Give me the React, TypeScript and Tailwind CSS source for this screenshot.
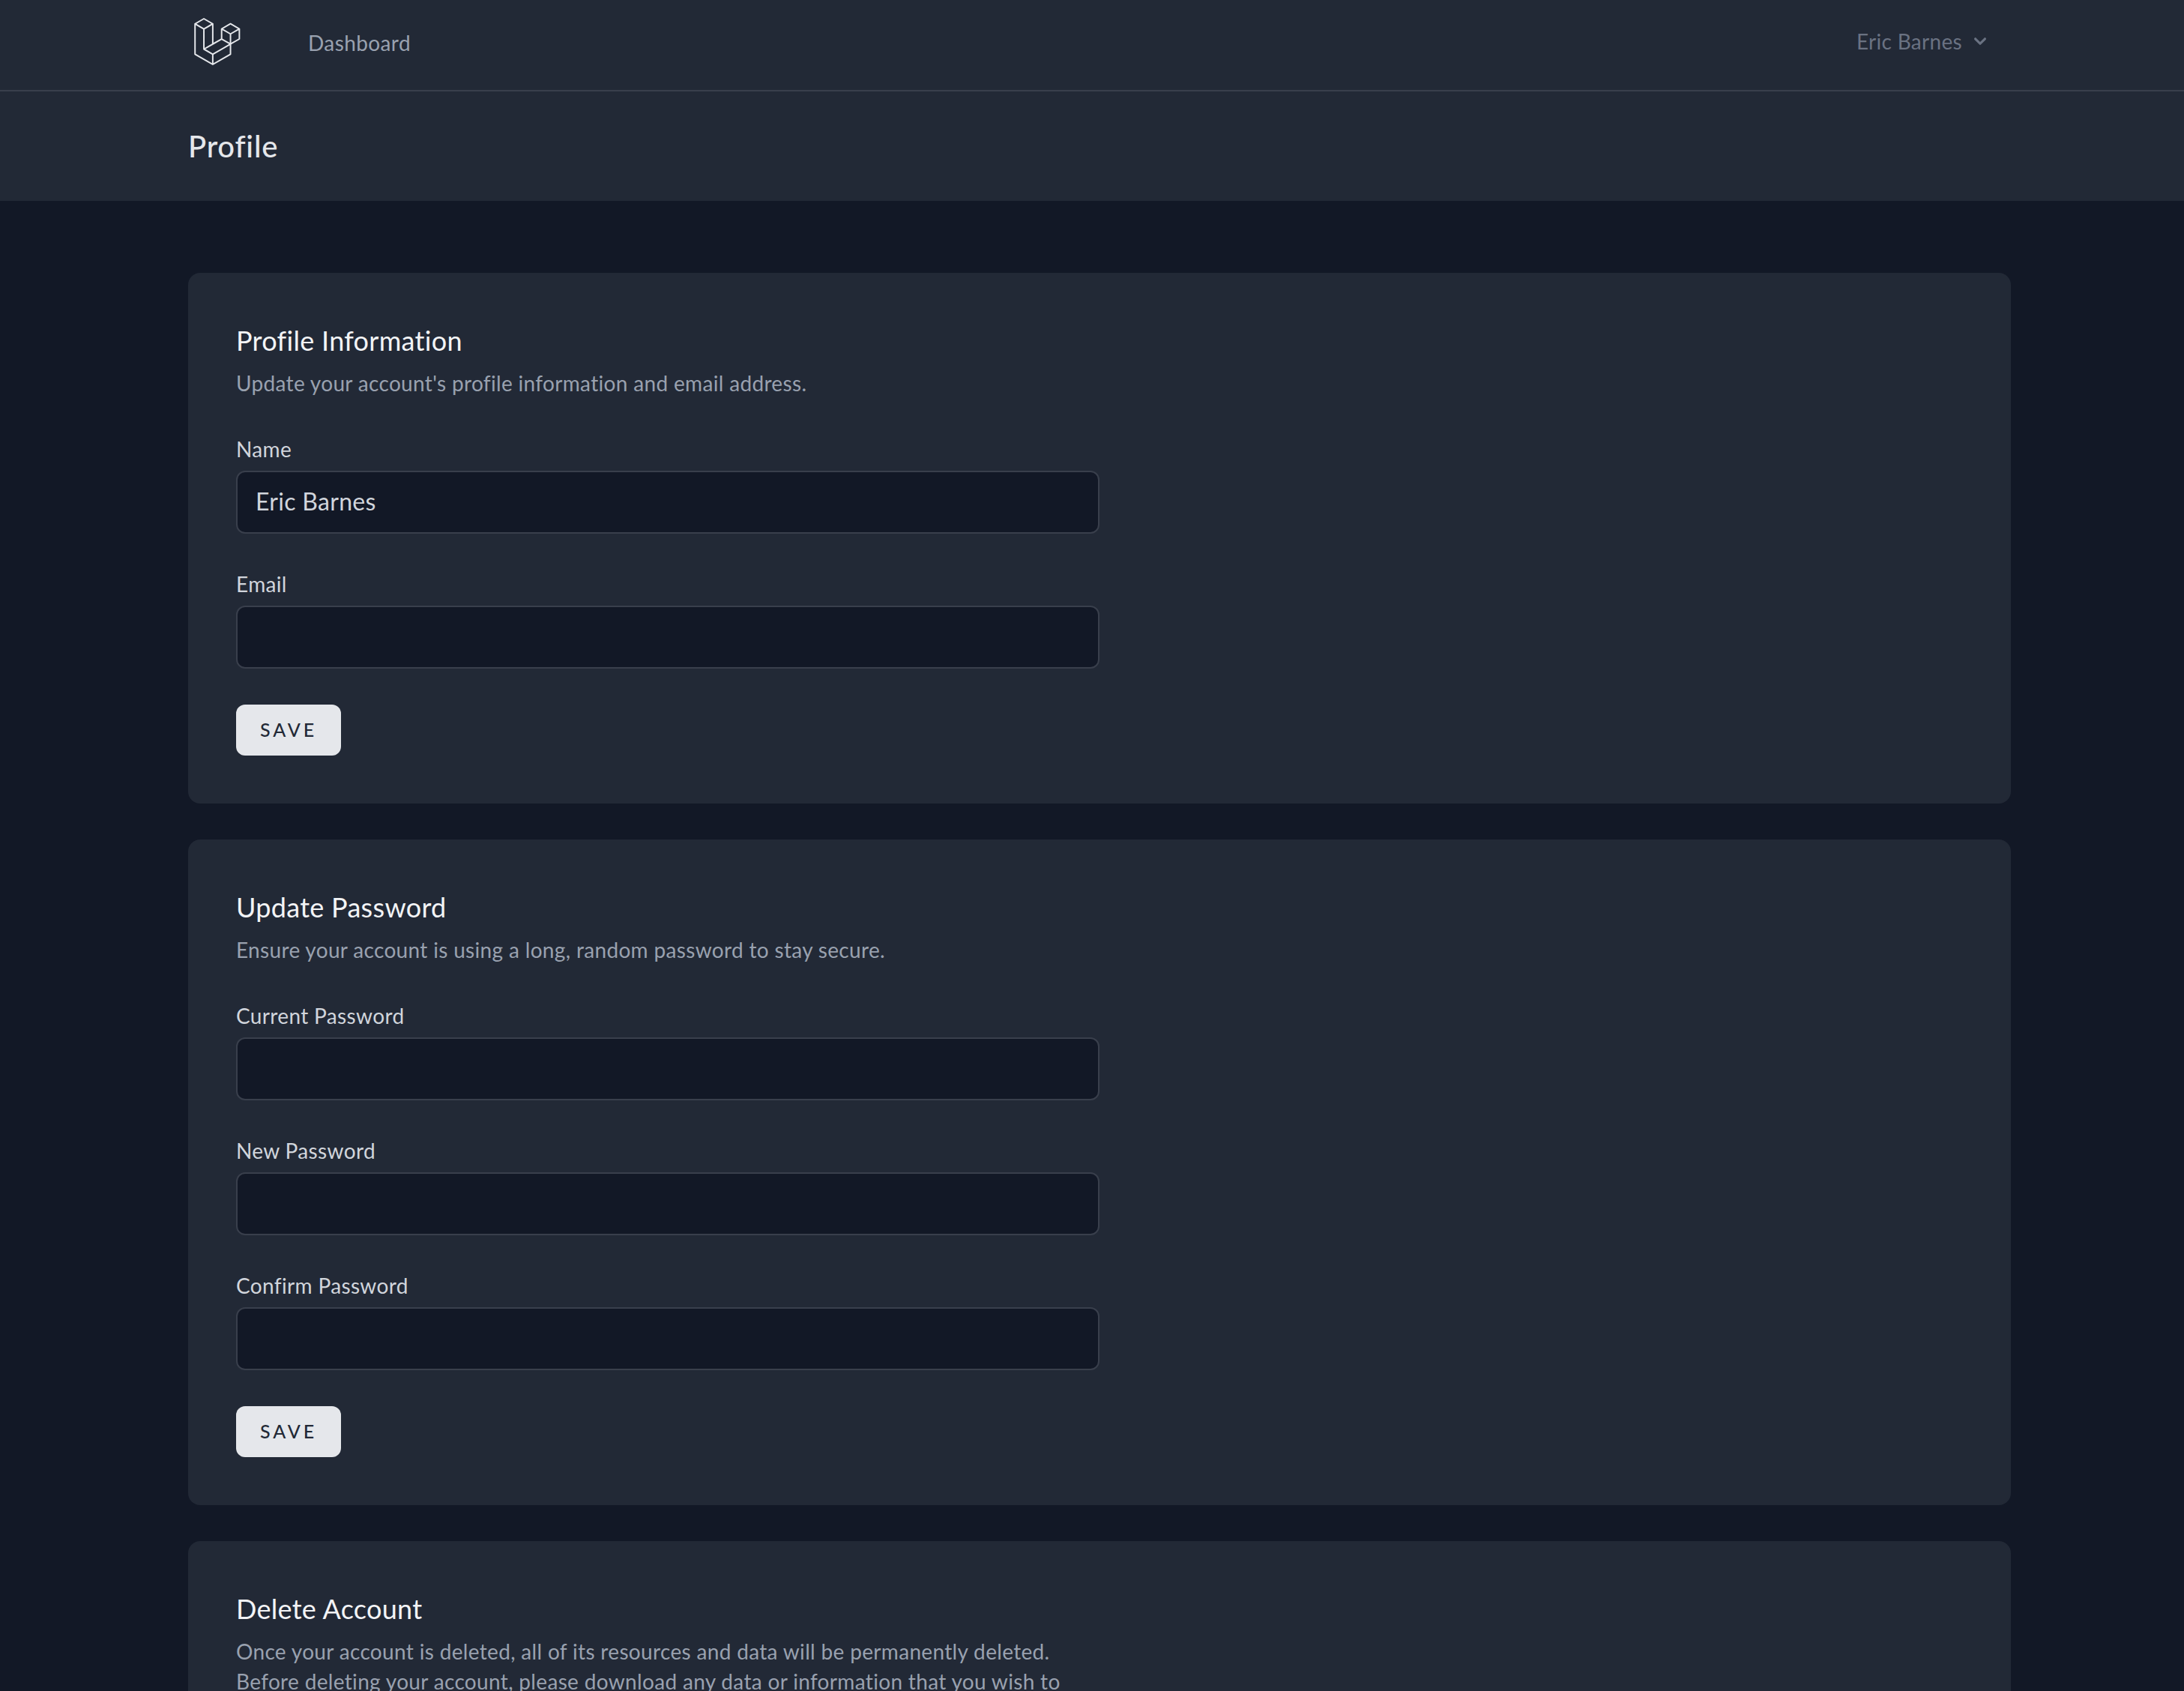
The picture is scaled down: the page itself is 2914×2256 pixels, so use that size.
const logoPath =
  "M49.626 11.564a.809.809 0 0 1 .028.209v10.972a.8.8 0 0 1-.402.694l-9.209 5.302V39.25c0 .286-.152.55-.4.694L20.42 51.01c-.044.025-.092.041-.14.058-.018.006-.035.017-.054.022a.805.805 0 0 1-.41 0c-.022-.006-.042-.018-.063-.026-.044-.016-.09-.03-.132-.054L.402 39.944A.801.801 0 0 1 0 39.25V6.334c0-.072.01-.142.028-.21.006-.023.02-.044.028-.067.015-.042.029-.085.051-.124.015-.026.037-.047.055-.071.023-.032.044-.065.071-.093.023-.023.053-.04.079-.06.029-.024.055-.05.088-.069h.001l9.61-5.533a.802.802 0 0 1 .8 0l9.61 5.533h.002c.032.02.059.045.088.068.026.02.055.038.078.06.028.029.048.062.072.094.017.024.04.045.054.071.023.04.036.082.052.124.008.023.022.044.028.068a.809.809 0 0 1 .028.209v20.559l8.008-4.611v-10.51c0-.07.01-.141.028-.208.007-.024.02-.045.028-.068.016-.042.03-.085.052-.124.015-.026.037-.047.054-.071.024-.032.044-.065.072-.093.023-.023.052-.04.078-.06.03-.024.056-.05.088-.069h.001l9.611-5.533a.801.801 0 0 1 .8 0l9.61 5.533c.034.02.06.045.09.068.025.02.054.038.077.06.028.029.048.062.072.094.018.024.04.045.054.071.023.039.036.082.052.124.009.023.022.044.028.068zm-1.574 10.718v-9.124l-3.363 1.936-4.646 2.675v9.124l8.01-4.611zm-9.61 16.505v-9.13l-4.57 2.61-13.05 7.448v9.216l17.62-10.144zM1.602 7.719v31.068L19.22 48.93v-9.214l-9.204-5.209-.003-.002-.004-.002c-.031-.018-.057-.044-.086-.066-.025-.02-.054-.036-.076-.058l-.002-.003c-.026-.025-.044-.056-.066-.084-.02-.027-.044-.05-.06-.078l-.001-.003c-.018-.03-.029-.066-.042-.1-.013-.03-.03-.058-.038-.09v-.001c-.01-.038-.012-.078-.016-.117-.004-.03-.012-.06-.012-.09v-.002-21.481L4.965 9.654 1.602 7.72zm8.81-5.994L2.405 6.334l8.005 4.609 8.006-4.61-8.006-4.608zm4.164 28.764l4.645-2.674V7.719l-3.363 1.936-4.646 2.675v20.096l3.364-1.937zM39.243 7.164l-8.006 4.609 8.006 4.609 8.005-4.61-8.005-4.608zm-.801 10.605l-4.646-2.675-3.363-1.936v9.124l4.645 2.674 3.364 1.937v-9.124zM20.02 38.33l11.743-6.704 5.87-3.35-8-4.606-9.211 5.303-8.395 4.833 7.993 4.524z";

function Field({ label, value }: { label: string; value?: string }) {
  return (
    <div>
      <label className="block pb-[2px] text-[28px] leading-[38px] text-gray-300 tracking-[0.35px]">{label}</label>
      <input
        readOnly
        value={value ?? ""}
        className="mt-2 block w-full h-[84px] px-6 pb-1 bg-[#121826] border-2 border-[#393f4c] rounded-xl text-[32px] text-gray-300 tracking-[0.3px] outline-none"
      />
    </div>
  );
}

function SaveButton() {
  return (
    <button className="inline-flex items-center h-[68px] px-8 bg-gray-200 rounded-xl text-[25px] font-medium tracking-[3.9px] text-[#222936] uppercase">
      Save
    </button>
  );
}

function Card({ title, children }: { title: string; children: React.ReactNode }) {
  return (
    <section className="p-16 bg-[#222936] rounded-2xl">
      <h2 className="pb-1 text-[36px] leading-[52px] text-gray-100 tracking-[0.3px]">{title}</h2>
      {children}
    </section>
  );
}

function Desc({ children }: { children: React.ReactNode }) {
  return <p className="mt-2 text-[28px] leading-[40px] text-gray-400 tracking-[0.33px] -translate-y-px">{children}</p>;
}

export default function App() {
  return (
    <div className="h-screen overflow-hidden bg-[#121826] font-['Lato','Liberation_Sans',sans-serif]">
      <nav className="bg-[#222936] border-b-2 border-[#393f4c]">
        <div className="w-[2432px] ml-[251px] h-[120px] flex justify-between">
          <div className="flex items-center pb-2">
            <svg viewBox="0 0 50 52" className="ml-2 w-[62px] h-16 fill-gray-200">
              <path d={logoPath} />
            </svg>
            <a className="ml-[90px] pt-[2px] text-[28px] leading-[40px] text-gray-400 tracking-[0.4px]">Dashboard</a>
          </div>
          <div className="flex items-center pb-[10px] pr-[25px] text-gray-500">
            <span className="text-[28px] leading-[40px] tracking-[0.3px]">Eric Barnes</span>
            <svg viewBox="0 0 20 20" className="ml-2 w-8 h-8 fill-current">
              <path
                fillRule="evenodd"
                clipRule="evenodd"
                d="M5.293 7.293a1 1 0 011.414 0L10 10.586l3.293-3.293a1 1 0 111.414 1.414l-4 4a1 1 0 01-1.414 0l-4-4a1 1 0 010-1.414z"
              />
            </svg>
          </div>
        </div>
      </nav>

      <header className="bg-[#222936]">
        <div className="w-[2432px] ml-[251px] py-12">
          <h1 className="pb-[2px] -mb-[2px] text-[40px] leading-[50px] font-medium text-gray-200 tracking-[0.8px]">Profile</h1>
        </div>
      </header>

      <main className="w-[2432px] ml-[251px] pt-24 flex flex-col gap-12">
        <Card title="Profile Information">
          <Desc>Update your account's profile information and email address.</Desc>
          <form className="mt-12 w-[1152px] flex flex-col gap-12">
            <Field label="Name" value="Eric Barnes" />
            <Field label="Email" />
            <div>
              <SaveButton />
            </div>
          </form>
        </Card>

        <Card title="Update Password">
          <Desc>Ensure your account is using a long, random password to stay secure.</Desc>
          <form className="mt-12 w-[1152px] flex flex-col gap-12">
            <Field label="Current Password" />
            <Field label="New Password" />
            <Field label="Confirm Password" />
            <div>
              <SaveButton />
            </div>
          </form>
        </Card>

        <Card title="Delete Account">
          <div className="w-[1152px]">
            <Desc>
              Once your account is deleted, all of its resources and data will be permanently deleted.
              <br />
              Before deleting your account, please download any data or information that you wish to
              <br />
              retain.
            </Desc>
          </div>
        </Card>
      </main>
    </div>
  );
}
